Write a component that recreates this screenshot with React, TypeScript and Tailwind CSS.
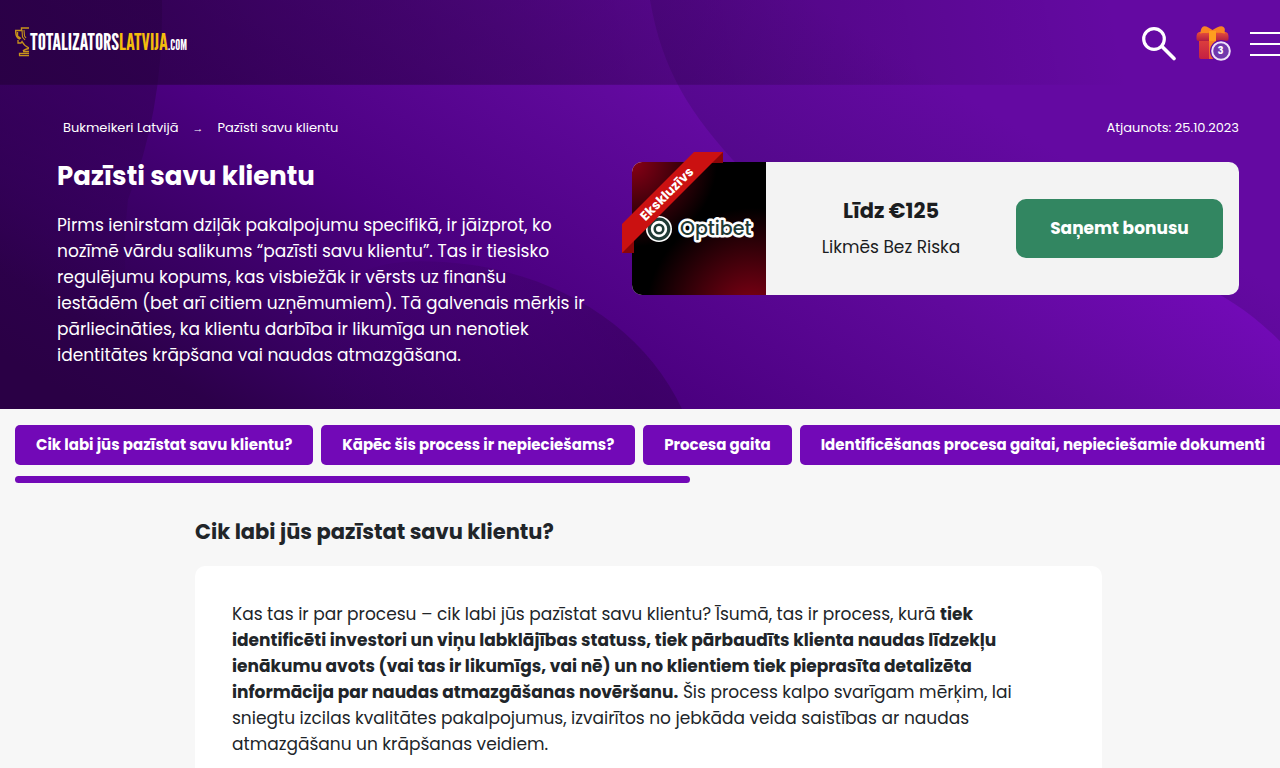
import type { ReactNode } from "react";

const SECTIONS = [
  "Cik labi jūs pazīstat savu klientu?",
  "Kāpēc šis process ir nepieciešams?",
  "Procesa gaita",
  "Identificēšanas procesa gaitai, nepieciešamie dokumenti",
];

function HeroBackground() {
  return (
    <svg
      className="absolute inset-0 h-full w-full"
      viewBox="0 0 1280 410"
      preserveAspectRatio="none"
      aria-hidden="true"
    >
      <defs>
        <linearGradient id="base" gradientUnits="userSpaceOnUse" x1="-159" y1="255" x2="212" y2="-340">
          <stop offset="0" stopColor="#2a0045" />
          <stop offset="0.1" stopColor="#2c004a" />
          <stop offset="0.22" stopColor="#36005e" />
          <stop offset="0.46" stopColor="#4b0080" />
          <stop offset="0.77" stopColor="#60099c" />
          <stop offset="1" stopColor="#720ab7" />
        </linearGradient>
        <linearGradient id="disc" gradientUnits="userSpaceOnUse" x1="320" y1="0" x2="640" y2="0">
          <stop offset="0" stopColor="#2b0048" stopOpacity="0" />
          <stop offset="1" stopColor="#2b0048" stopOpacity="0.4" />
        </linearGradient>
        <linearGradient id="right" gradientUnits="userSpaceOnUse" x1="133" y1="-212" x2="225" y2="-361">
          <stop offset="0" stopColor="#54088c" />
          <stop offset="1" stopColor="#6409a2" />
        </linearGradient>
        <linearGradient id="left" x1="0" y1="0" x2="0" y2="1">
          <stop offset="0" stopColor="#2b0048" stopOpacity="0.5" />
          <stop offset="0.3" stopColor="#2b0048" stopOpacity="0.45" />
          <stop offset="0.8" stopColor="#2b0048" stopOpacity="0" />
        </linearGradient>
        <linearGradient id="shade" gradientUnits="userSpaceOnUse" x1="0" y1="85" x2="1090" y2="-120">
          <stop offset="0" stopColor="#280042" stopOpacity="0.85" />
          <stop offset="0.25" stopColor="#280042" stopOpacity="0.6" />
          <stop offset="0.6" stopColor="#280042" stopOpacity="0.36" />
          <stop offset="1" stopColor="#280042" stopOpacity="0" />
        </linearGradient>
      </defs>
      <rect width="1280" height="410" fill="url(#base)" />
      <path d="M0 0 H162 Q164 110 128 200 Q116 300 150 410 H0 Z" fill="url(#left)" />
      <path d="M250 410 C290 310 340 262 420 262 C540 262 640 320 682 410 Z" fill="url(#disc)" />
      <path d="M650 0 C662 70 690 115 742 170 C860 290 1120 180 1280 342 V0 Z" fill="url(#right)" />
      <rect width="1280" height="85" fill="url(#shade)" />
    </svg>
  );
}

function TrophyIcon() {
  return (
    <svg className="h-[30px] w-[14px]" viewBox="0 0 14 30" fill="none" stroke="#c7921b" aria-hidden="true">
      <path d="M14 1 H6.500 V3.500 H0.700 C0.500 8 2 11.500 5 12 M2.500 5 V9 L6 11.500" strokeWidth="1.400" />
      <path d="M7 3 L7.500 10 L10 13 M9 3 L9.500 9 L11 11" strokeWidth="1.100" />
      <path d="M3 13 V16 H6 L7 14.500 C8.500 17.500 10.500 19.500 14 21 M8 24.500 H14 M8 24 C9 22.500 11 22 14 21.500 M4.500 28.700 V26.500 H14 M4 28.700 H14" strokeWidth="1.300" />
    </svg>
  );
}

function SearchIcon() {
  return (
    <svg className="h-[34px] w-[34px]" viewBox="0 0 34 34" fill="none" stroke="white" aria-hidden="true">
      <circle cx="12" cy="12" r="10.300" strokeWidth="3.200" />
      <path d="M20 19.500 L32 31.500" strokeWidth="3.600" strokeLinecap="round" />
    </svg>
  );
}

function GiftIcon() {
  return (
    <svg className="h-[36px] w-[36px]" viewBox="0 0 36 36" aria-hidden="true">
      <defs>
        <linearGradient id="box" x1="0" y1="0" x2="0" y2="1">
          <stop offset="0" stopColor="#dd3f3c" />
          <stop offset="1" stopColor="#c41f43" />
        </linearGradient>
        <linearGradient id="lid" x1="0" y1="0" x2="0" y2="1">
          <stop offset="0" stopColor="#e8503a" />
          <stop offset="1" stopColor="#b01c42" />
        </linearGradient>
        <linearGradient id="band" x1="0" y1="0" x2="0" y2="1">
          <stop offset="0" stopColor="#ff9a1e" />
          <stop offset="1" stopColor="#ee5a33" />
        </linearGradient>
      </defs>
      <path d="M4 14 H31 V31 Q31 33 29 33 H6 Q4 33 4 31 Z" fill="url(#box)" />
      <path d="M4 6 H31 Q33.500 7 33.500 10 V13 Q33.500 15 31.500 15 H3.500 Q1.500 15 1.500 13 V10 Q1.500 7 4 6 Z" fill="url(#lid)" />
      <path d="M17.500 4 C14 2 10 -1 7.500 1 C5.500 3 6 5 5 7.500 C9 6.500 13 8 17.500 5.500 C22 8 26 6.500 30 7.500 C29 5 31 3 28.500 1 C26 -1 21 2 17.500 4 Z" fill="#f98324" />
      <path d="M14 5 H21 V33 H14 Z" fill="url(#band)" />
      <path d="M14 5 H21 V15 H14 Z" fill="#ff9d1e" />
      <circle cx="26" cy="25" r="11" fill="#6409a2" />
      <circle cx="26" cy="25" r="8.800" fill="#7138ac" stroke="#efe3fa" strokeWidth="2" />
    </svg>
  );
}

function OptibetLogo() {
  return (
    <div className="flex items-center gap-1">
      <svg className="h-[28px] w-[28px]" viewBox="0 0 28 28" fill="none" aria-hidden="true">
        <circle cx="13" cy="14" r="13" fill="white" />
        <circle cx="13" cy="14" r="9.800" stroke="#1f3a35" strokeWidth="3.200" />
        <circle cx="13" cy="14" r="4.300" stroke="#1f3a35" strokeWidth="2.600" />
      </svg>
      <svg className="h-[32px] w-[78px]" viewBox="0 0 78 32" role="img" aria-label="Optibet">
        <text
          x="2"
          y="22"
          fontFamily="Poppins, Inter, sans-serif"
          fontSize="19"
          fontWeight="500"
          fill="#1f3a35"
          stroke="white"
          strokeWidth="5"
          strokeLinejoin="round"
          paintOrder="stroke"
        >
          Optibet
        </text>
      </svg>
    </div>
  );
}

function Ribbon() {
  return (
    <svg className="absolute -left-[10px] -top-[11px] h-[103px] w-[102px]" viewBox="0 0 102 103">
      <path d="M90 1 H101 V12 H88 Z M0 90 V102 H12 V88 Z" fill="#8a0508" />
      <path d="M72 1 H101 L0 102 V73 Z" fill="#cb1111" />
      <text
        x="48"
        y="46"
        transform="rotate(-45 48 46)"
        textAnchor="middle"
        fontFamily="Poppins, Inter, sans-serif"
        fontSize="13"
        fontWeight="700"
        fill="white"
      >
        Ekskluzīvs
      </text>
    </svg>
  );
}

function Header() {
  return (
    <header className="flex h-[85px] items-center justify-between pt-[2px] pl-[15px]">
      <a href="#" className="flex items-center gap-px pb-1">
        <TrophyIcon />
        <span className="flex items-baseline font-['League_Gothic','Bebas_Neue','Oswald','Roboto_Condensed',sans-serif] text-[23px] leading-none font-light text-white">
          TOTALIZATORS<span className="text-[#f4bd0c]">LATVIJA</span>
          <span className="text-[14px]">.COM</span>
        </span>
      </a>
      <div className="-mr-1 flex items-center gap-[19px]">
        <button type="button" aria-label="Meklēt">
          <SearchIcon />
        </button>
        <button type="button" aria-label="Bonusi" className="relative">
          <GiftIcon />
          <span className="absolute bottom-1 right-[6px] w-[9px] text-center text-[10px] leading-[14px] font-bold text-white">
            3
          </span>
        </button>
        <button type="button" aria-label="Izvēlne" className="flex w-[34px] flex-col gap-[9px]">
          <span className="h-[2px] bg-white" />
          <span className="h-[2px] bg-white" />
          <span className="h-[2px] bg-white" />
        </button>
      </div>
    </header>
  );
}

function BonusCard() {
  return (
    <div className="relative flex h-[133px] rounded-[10px] bg-[#f3f3f3] text-[#1b1d1f]">
      <div className="flex w-[134px] items-center justify-end overflow-hidden rounded-l-[10px] bg-[radial-gradient(circle_at_0%_0%,#8a0016_0%,transparent_45%),radial-gradient(circle_at_90%_115%,#8a0016_0%,transparent_55%)] bg-black pr-[10px]">
        <OptibetLogo />
      </div>
      <Ribbon />
      <div className="flex flex-1 flex-col items-center justify-center gap-2 pt-px">
        <p className="text-[21px] leading-7 font-bold">Līdz €125</p>
        <p className="text-[17px] leading-7">Likmēs Bez Riska</p>
      </div>
      <button
        type="button"
        className="mr-4 h-[59px] w-[207px] self-center rounded-[10px] bg-[#328661] text-[17px] font-bold text-white"
      >
        Saņemt bonusu
      </button>
    </div>
  );
}

function Hero({ children }: { children: ReactNode }) {
  return (
    <div className="relative h-[409px] bg-[#2b0048] text-white">
      <HeroBackground />
      <div className="relative">{children}</div>
    </div>
  );
}

export default function App() {
  return (
    <div className="min-h-screen overflow-x-hidden bg-[#f7f7f7] font-[Poppins,Inter,sans-serif] text-[#212529]">
      <Hero>
        <Header />
        <div className="pr-[41px] pl-[57px]">
          <div className="flex items-center justify-between pt-[34px] pl-[6px] text-[13px] leading-[18px]">
            <nav className="flex items-center gap-[14px]">
              <a href="#">Bukmeikeri Latvijā</a>
              <span className="w-[11px] text-center font-['Liberation_Sans',sans-serif] text-[11px]">→</span>
              <span>Pazīsti savu klientu</span>
            </nav>
            <span>Atjaunots: 25.10.2023</span>
          </div>
          <div className="mt-[25px] grid grid-cols-[575fr_607fr]">
            <div>
              <h1 className="text-[26px] leading-7 font-bold">Pazīsti savu klientu</h1>
              <p className="mt-[22px] text-[17px] leading-[26px]">
                Pirms ienirstam dziļāk pakalpojumu specifikā, ir jāizprot, ko
                <br />
                nozīmē vārdu salikums “pazīsti savu klientu”. Tas ir tiesisko
                <br />
                regulējumu kopums, kas visbiežāk ir vērsts uz finanšu
                <br />
                iestādēm (bet arī citiem uzņēmumiem). Tā galvenais mērķis ir
                <br />
                pārliecināties, ka klientu darbība ir likumīga un nenotiek
                <br />
                identitātes krāpšana vai naudas atmazgāšana.
              </p>
            </div>
            <BonusCard />
          </div>
        </div>
      </Hero>

      <nav className="overflow-hidden pt-4 pl-[15px]">
        <div className="flex gap-2">
          {SECTIONS.map((title) => (
            <a
              key={title}
              href="#"
              className="h-10 shrink-0 rounded-[5px] bg-[#7209b7] px-[21px] text-[15px] leading-10 font-bold whitespace-nowrap text-white"
            >
              {title}
            </a>
          ))}
        </div>
        <div className="mt-[11px] mr-[15px]">
          <div className="h-[7px] w-[54%] rounded-full bg-[#7209b7]" />
        </div>
      </nav>

      <main className="mr-[178px] ml-[195px]">
        <h2 className="mt-[35px] text-[21px] leading-7 font-bold">Cik labi jūs pazīstat savu klientu?</h2>
        <div className="mt-5 rounded-[10px] bg-white px-[37px] py-[35px]">
          <p className="text-[17px] leading-[26px]">
            Kas tas ir par procesu – cik labi jūs pazīstat savu klientu? Īsumā, tas ir process, kurā <b>tiek</b>
            <br />
            <b>
              identificēti investori un viņu labklājības statuss, tiek pārbaudīts klienta naudas līdzekļu
              <br />
              ienākumu avots (vai tas ir likumīgs, vai nē) un no klientiem tiek pieprasīta detalizēta
              <br />
              informācija par naudas atmazgāšanas novēršanu.
            </b>{" "}
            Šis process kalpo svarīgam mērķim, lai
            <br />
            sniegtu izcilas kvalitātes pakalpojumus, izvairītos no jebkāda veida saistības ar naudas
            <br />
            atmazgāšanu un krāpšanas veidiem.
          </p>
        </div>
      </main>
    </div>
  );
}
